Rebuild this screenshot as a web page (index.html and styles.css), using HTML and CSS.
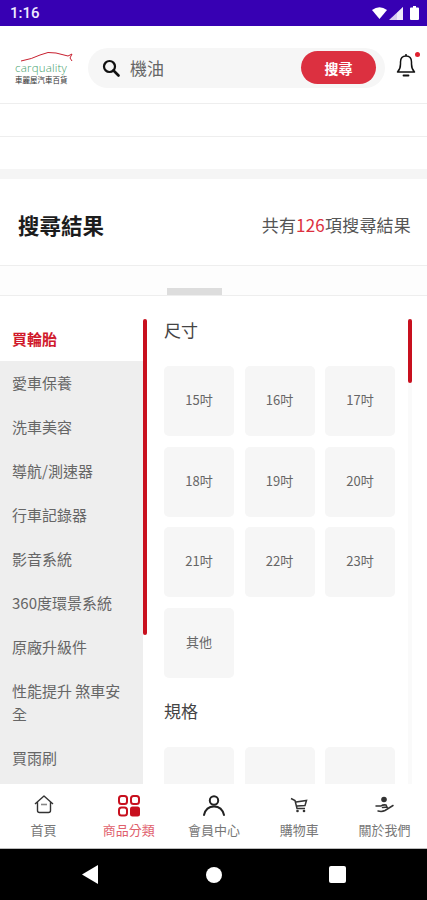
FILE: index.html
```html
<!DOCTYPE html>
<html lang="zh-Hant">
<head>
    <meta charset="UTF-8">
    <meta name="viewport" content="width=device-width, initial-scale=1.0">
    <title>搜尋結果</title>
    <link rel="stylesheet" href="styles.css">
</head>
<body>
<div class="page">
    <div class="status">
        <span class="time">1:16</span>
        <div class="status-icons">
            <svg width="15" height="12" viewBox="0 0 15 12"><path d="M0 3 Q7.5 -2.500 15 3 L7.500 12 Z" fill="#fff"/></svg>
            <svg class="cell" width="14" height="13" viewBox="0 0 14 13"><path d="M14 0 V13 H0 Z" fill="#fff" opacity=".8"/><path d="M14 0 V13 H8 V6 Z" fill="#fff" opacity=".6"/></svg>
            <svg width="9" height="14" viewBox="0 0 9 14"><path d="M3 0 H6 V1.500 H8 Q9 1.500 9 2.500 V13 Q9 14 8 14 H1 Q0 14 0 13 V2.500 Q0 1.500 1 1.500 H3 Z" fill="#fff"/></svg>
        </div>
    </div>

    <header class="header">
        <div class="logo">
            <svg class="logo-car" width="56" height="12" viewBox="0 0 56 12"><path d="M3 11 Q14 9 22 5 Q30 1 38 3 L50 6 L54 4 L52 8 L54 11" fill="none" stroke="#c8202f" stroke-width="1"/></svg>
            <span class="logo-name">carquality</span>
            <span class="logo-sub">車麗屋汽車百貨</span>
        </div>
        <div class="search">
            <svg class="search-icon" width="18" height="18" viewBox="0 0 18 18"><circle cx="7.500" cy="7.500" r="5.500" fill="none" stroke="#111" stroke-width="2.200"/><path d="M11.500 11.500 L16.500 16.500" stroke="#111" stroke-width="2.600" stroke-linecap="round"/></svg>
            <span class="search-text">機油</span>
            <button class="search-btn">搜尋</button>
        </div>
        <div class="bell">
            <svg width="20" height="25" viewBox="0 0 20 25"><path d="M1.500 19 Q4.500 16 4.500 11 V9 Q4.500 3 10 3 Q15.500 3 15.500 9 V11 Q15.500 16 18.500 19 Z" fill="none" stroke="#111" stroke-width="1.500" stroke-linejoin="round"/><path d="M10 1 V3" stroke="#111" stroke-width="1.500"/><path d="M7.500 22.500 H12.500" stroke="#111" stroke-width="1.800" stroke-linecap="round"/></svg>
            <span class="bell-dot"></span>
        </div>
    </header>

    <div class="blank-row"></div>
    <div class="band"></div>

    <div class="result-head">
        <h1>搜尋結果</h1>
        <p>共有<span class="count">126</span>項搜尋結果</p>
    </div>

    <div class="tabs"><span class="tab-mark"></span></div>

    <div class="panel">
        <ul class="side">
            <li class="active">買輪胎</li>
            <li>愛車保養</li>
            <li>洗車美容</li>
            <li>導航/測速器</li>
            <li>行車記錄器</li>
            <li>影音系統</li>
            <li>360度環景系統</li>
            <li>原廠升級件</li>
            <li>性能提升 煞車安全</li>
            <li>買雨刷</li>
        </ul>
        <span class="side-bar"></span>
        <div class="filters">
            <h2>尺寸</h2>
            <div class="tiles">
                <div class="tile">15吋</div>
                <div class="tile">16吋</div>
                <div class="tile">17吋</div>
                <div class="tile">18吋</div>
                <div class="tile">19吋</div>
                <div class="tile">20吋</div>
                <div class="tile">21吋</div>
                <div class="tile">22吋</div>
                <div class="tile">23吋</div>
                <div class="tile">其他</div>
            </div>
            <h2 class="second">規格</h2>
            <div class="tiles">
                <div class="tile"></div>
                <div class="tile"></div>
                <div class="tile"></div>
            </div>
        </div>
        <span class="filter-track"></span>
        <span class="filter-bar"></span>
    </div>

    <nav class="nav">
        <div class="nav-item">
            <svg width="22" height="22" viewBox="0 0 22 22"><path d="M2 9 L11 1 L20 9 M4.500 7 V15.500 Q4.500 17.500 6.500 17.500 H15.500 Q17.500 17.500 17.500 15.500 V7" fill="none" stroke="#333" stroke-width="1.400" stroke-linejoin="round"/><path d="M8 9.500 H14" stroke="#888" stroke-width="1.600"/></svg>
            <span>首頁</span>
        </div>
        <div class="nav-item on">
            <svg width="22" height="22" viewBox="0 0 22 22"><g fill="none" stroke="#c8101e" stroke-width="2"><rect x="1" y="1" width="8" height="8" rx="2.500"/><rect x="13" y="1" width="8" height="8" rx="2.500"/><rect x="1" y="12.500" width="8" height="8" rx="2.500"/></g><rect x="12" y="11.500" width="10" height="10" rx="2.500" fill="#c8101e"/></svg>
            <span>商品分類</span>
        </div>
        <div class="nav-item">
            <svg width="24" height="22" viewBox="0 0 24 22"><circle cx="12" cy="5.500" r="4.200" fill="none" stroke="#222" stroke-width="2"/><path d="M2 20 Q4 11.500 12 11.500 Q20 11.500 22 20" fill="none" stroke="#222" stroke-width="2" stroke-linecap="round"/></svg>
            <span>會員中心</span>
        </div>
        <div class="nav-item">
            <svg width="22" height="22" viewBox="0 0 22 22"><path d="M3 3.500 L7 5.500 L9 13.500 H17 M8 7 L18.500 5.500 L17 10.500 L9 11" fill="none" stroke="#333" stroke-width="1.500"/><circle cx="9.500" cy="16" r="1.300" fill="#333"/><circle cx="16" cy="16" r="1.300" fill="#333"/></svg>
            <span>購物車</span>
        </div>
        <div class="nav-item">
            <svg width="22" height="22" viewBox="0 0 22 22"><circle cx="11" cy="4.500" r="2.800" fill="#333"/><path d="M3 11 H8 Q10 9.500 13 10 L14 12 L9.500 12.500 M5 16 Q9 17 12 15.500 L20 10.500" fill="none" stroke="#333" stroke-width="1.500" stroke-linecap="round"/></svg>
            <span>關於我們</span>
        </div>
    </nav>

    <div class="sysnav">
        <svg width="18" height="20" viewBox="0 0 18 20"><path d="M17 0 V19 L1 9.500 Z" fill="#fff"/></svg>
        <span class="sys-home"></span>
        <span class="sys-recent"></span>
    </div>
</div>
</body>
</html>
```

FILE: styles.css
```css
* {
    box-sizing: border-box;
}
body {
    margin: 0;
    font-family: "Noto Sans CJK TC", "Noto Sans", sans-serif;
    background-color: #fff;
    color: #333;
}
.page {
    height: 900px;
    display: flex;
    flex-direction: column;
    overflow: hidden;
}

.status {
    height: 26px;
    flex: none;
    background-color: #3700b3;
    color: #f0eaff;
    display: flex;
    align-items: center;
    justify-content: space-between;
    padding: 0 8px 0 10px;
}
.time {
    font-family: Roboto, sans-serif;
    font-size: 15px;
    font-weight: 500;
}
.status-icons {
    display: flex;
    align-items: center;
    gap: 2px;
}
.status-icons .cell {
    margin-right: 5px;
}

.header {
    height: 78px;
    flex: none;
    display: flex;
    align-items: center;
    border-bottom: 1px solid #eee;
    padding: 6px 0 0 15px;
}
.logo {
    width: 73px;
    flex: none;
    height: 34px;
    position: relative;
    display: flex;
    flex-direction: column;
    align-items: flex-start;
    justify-content: flex-end;
}
.logo-car {
    position: absolute;
    top: -1px;
    left: 3px;
}
.logo-name {
    font-family: "Open Sans", sans-serif;
    font-size: 11.500px;
    line-height: 12px;
    font-weight: 300;
    letter-spacing: .2px;
    color: #3f9e6a;
}
.logo-sub {
    font-size: 7.500px;
    line-height: 11px;
    color: #333;
    white-space: nowrap;
}
.search {
    width: 297px;
    height: 40px;
    flex: none;
    border-radius: 20px;
    background-color: #f6f6f6;
    display: flex;
    align-items: center;
    padding: 0 9px 0 14px;
}
.search-icon {
    flex: none;
}
.search-text {
    margin-left: 10px;
    font-size: 17px;
    color: #666;
    flex: 1;
}
.search-btn {
    width: 75px;
    height: 33px;
    border: none;
    border-radius: 17px;
    background-color: #dc3040;
    color: #fff;
    font-family: inherit;
    font-size: 14px;
    font-weight: 700;
    padding: 0;
}
.bell {
    position: relative;
    margin: -4px 0 0 11px;
    display: flex;
}
.bell-dot {
    position: absolute;
    top: -1px;
    right: -4px;
    width: 5px;
    height: 5px;
    border-radius: 50%;
    background-color: #e0202e;
}

.blank-row {
    height: 33px;
    flex: none;
    border-bottom: 1px solid #eee;
}
.band {
    height: 42px;
    flex: none;
    border-bottom: 10px solid #f5f5f5;
}

.result-head {
    height: 87px;
    flex: none;
    display: flex;
    align-items: center;
    justify-content: space-between;
    border-bottom: 1px solid #eee;
    padding: 4px 16px 0 18px;
}
.result-head h1 {
    margin: 0;
    font-size: 21.500px;
    font-weight: 700;
    color: #1c1c1c;
}
.result-head p {
    margin: 0;
    font-size: 17px;
    letter-spacing: .2px;
    color: #555;
}
.count {
    color: #dc3040;
}

.tabs {
    height: 30px;
    flex: none;
    background-color: #fdfdfd;
    border-bottom: 1px solid #eee;
    padding-left: 167px;
    display: flex;
    align-items: flex-end;
}
.tab-mark {
    width: 55px;
    height: 7px;
    background-color: #ddd;
}

.panel {
    flex: 1;
    min-height: 0;
    position: relative;
    display: flex;
    overflow: hidden;
}
.side {
    width: 143px;
    flex: none;
    margin: 21px 0 0;
    padding: 0;
    list-style: none;
    background-color: #eee;
}
.side li {
    padding: 10px 12px 11px;
    font-size: 15px;
    line-height: 23px;
    color: #666;
}
.side li.active {
    background-color: #fff;
    color: #d0192b;
    font-weight: 700;
}
.side-bar {
    position: absolute;
    left: 143px;
    top: 23px;
    width: 4px;
    height: 316px;
    border-radius: 2px;
    background-color: #c8101e;
}
.filters {
    width: 230px;
    flex: none;
    margin-left: 21px;
    padding-top: 22px;
}
.filters h2 {
    margin: 0 0 24px;
    font-size: 17px;
    line-height: 24px;
    font-weight: 400;
    color: #444;
}
.filters h2.second {
    margin-top: 21px;
}
.tiles {
    display: grid;
    grid-template-columns: repeat(3, 70px);
    grid-auto-rows: 70px;
    gap: 10.500px;
}
.tile {
    border-radius: 5px;
    background-color: #f6f6f6;
    display: flex;
    align-items: center;
    justify-content: center;
    padding-bottom: 3px;
    font-size: 13px;
    color: #666;
}
.filter-track {
    position: absolute;
    left: 408px;
    top: 23px;
    bottom: 0;
    width: 4px;
    background-color: #fafafa;
}
.filter-bar {
    position: absolute;
    left: 408px;
    top: 23px;
    width: 4px;
    height: 64px;
    border-radius: 2px;
    background-color: #c8101e;
}

.nav {
    height: 65px;
    flex: none;
    background-color: #fff;
    display: grid;
    grid-template-columns: repeat(5, 1fr);
    padding-left: 1px;
    border-bottom: 1px solid #bbb;
}
.nav-item {
    display: flex;
    flex-direction: column;
    align-items: center;
    justify-content: flex-end;
    font-size: 13px;
    line-height: 16px;
    color: #777;
    padding-bottom: 10px;
    gap: 5px;
}
.nav-item.on {
    color: #e0606c;
}
.sysnav {
    height: 51px;
    flex: none;
    background-color: #000;
    display: flex;
    align-items: center;
    justify-content: center;
    gap: 107px;
}
.sys-home {
    width: 16px;
    height: 16px;
    border-radius: 50%;
    background-color: #fff;
}
.sys-recent {
    width: 17px;
    height: 17px;
    border-radius: 2px;
    background-color: #fff;
}
```
